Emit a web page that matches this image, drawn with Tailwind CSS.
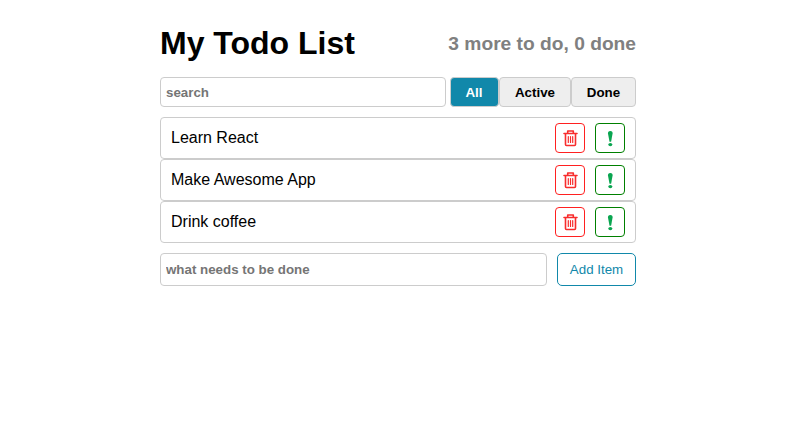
<!DOCTYPE html>
<html lang="en">
<head>
<meta charset="utf-8">
<title>My Todo List</title>
<script src="https://cdn.jsdelivr.net/npm/@tailwindcss/browser@4"></script>
</head>
<body class="bg-white text-black font-['Liberation_Sans',Arial,sans-serif]">
<svg class="hidden">
  <symbol id="trash" viewBox="0 0 16 18">
    <g fill="none" stroke="#f82c2c" stroke-width="1.6" stroke-linejoin="round" stroke-linecap="round">
      <path d="M2 4.500h13M5.700 4.300V2h5.600v2.300M3.500 5v10.500q0 1 1 1h8q1 0 1-1V5"/>
      <path d="M6.300 7.500v6M8.500 7.500v6M10.700 7.500v6" stroke-width="1.200"/>
    </g>
  </symbol>
  <symbol id="bang" viewBox="0 0 6 16">
    <path fill="#0aa550" d="M3.300 0C1.500 0 .9 1 1 2.600L2.500 10.800h1.600L5.600 2.600C5.700 1 5.100 0 3.300 0Z"/>
    <ellipse cx="3.300" cy="13.600" rx="2" ry="1.600" fill="#0aa550"/>
  </symbol>
</svg>
<main class="ml-[160px] w-[476px] pt-[20px]">
  <header class="flex h-[47px] items-center justify-between">
    <h1 class="pb-px text-[32px] leading-[44px] font-bold">My Todo List</h1>
    <h2 class="text-[19.2px] leading-[22px] font-bold text-[#808080]">3 more to do, 0 done</h2>
  </header>
  <div class="mt-[10px] flex h-[30px]">
    <input class="mr-1 w-[286px] rounded-[4px] border border-[#ccc] px-[5px] pt-[2px] text-[13.333px] font-bold placeholder:text-[#757575]" placeholder="search">
    <button class="w-[49px] rounded-[4px] border border-[#ccc] bg-[#1188aa] pt-[2px] pr-px text-[13.333px] font-bold text-white">All</button>
    <button class="w-[72px] rounded-[4px] border border-[#ccc] bg-[#eee] pt-[2px] text-[13.333px] font-bold">Active</button>
    <button class="w-[65px] rounded-[4px] border border-[#ccc] bg-[#eee] pt-[2px] text-[13.333px] font-bold">Done</button>
  </div>
  <ul class="mt-[10px]">
    <li class="flex h-[42px] items-center gap-[10px] rounded-[4px] border border-[#ccc] px-[10px]">
      <span class="flex-1 pb-px text-[16px] leading-[18px]">Learn React</span>
      <button class="flex size-[30px] items-center justify-center rounded-[4px] border border-[#ff2020]"><svg class="h-[18px] w-4"><use href="#trash"/></svg></button>
      <button class="flex size-[30px] items-center justify-center rounded-[4px] border border-[#008000] pt-px"><svg class="h-4 w-1.5"><use href="#bang"/></svg></button>
    </li>
    <li class="flex h-[42px] items-center gap-[10px] rounded-[4px] border border-[#ccc] px-[10px]">
      <span class="flex-1 pb-px text-[16px] leading-[18px]">Make Awesome App</span>
      <button class="flex size-[30px] items-center justify-center rounded-[4px] border border-[#ff2020]"><svg class="h-[18px] w-4"><use href="#trash"/></svg></button>
      <button class="flex size-[30px] items-center justify-center rounded-[4px] border border-[#008000] pt-px"><svg class="h-4 w-1.5"><use href="#bang"/></svg></button>
    </li>
    <li class="flex h-[42px] items-center gap-[10px] rounded-[4px] border border-[#ccc] px-[10px]">
      <span class="flex-1 pb-px text-[16px] leading-[18px]">Drink coffee</span>
      <button class="flex size-[30px] items-center justify-center rounded-[4px] border border-[#ff2020]"><svg class="h-[18px] w-4"><use href="#trash"/></svg></button>
      <button class="flex size-[30px] items-center justify-center rounded-[4px] border border-[#008000] pt-px"><svg class="h-4 w-1.5"><use href="#bang"/></svg></button>
    </li>
  </ul>
  <form class="mt-[10px] flex h-[33px] gap-[10px]">
    <input class="w-[387px] rounded-[4px] border border-[#ccc] px-[5px] text-[13.333px] font-bold placeholder:text-[#757575]" placeholder="what needs to be done">
    <button type="button" class="w-[79px] rounded-[5px] border border-[#1188aa] text-[13.333px] text-[#1188aa]">Add Item</button>
  </form>
</main>
</body>
</html>
